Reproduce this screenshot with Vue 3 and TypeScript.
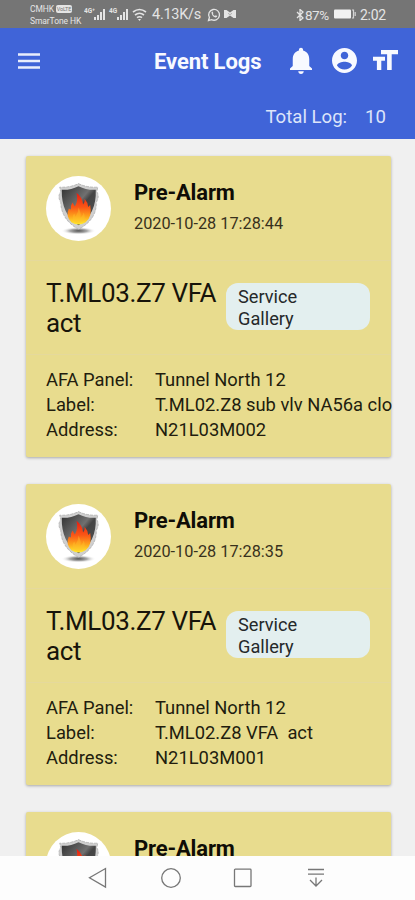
<script setup lang="ts">
interface LogEntry {
  id: number
  title: string
  time?: string
  message?: string
  location?: string
  panel?: string
  label?: string
  address?: string
}

const total = 10

const logs: LogEntry[] = [
  { id: 1, title: 'Pre-Alarm', time: '2020-10-28 17:28:44', message: 'T.ML03.Z7 VFA act', location: 'Service Gallery', panel: 'Tunnel North 12', label: 'T.ML02.Z8 sub vlv NA56a clo', address: 'N21L03M002' },
  { id: 2, title: 'Pre-Alarm', time: '2020-10-28 17:28:35', message: 'T.ML03.Z7 VFA act', location: 'Service Gallery', panel: 'Tunnel North 12', label: 'T.ML02.Z8 VFA  act', address: 'N21L03M001' },
  { id: 3, title: 'Pre-Alarm' },
]
</script>

<template>
  <div class="screen">
    <div class="status">
      <div class="carriers">
        <div class="carrier">CMHK <span class="volte">VoLTE</span></div>
        <div class="carrier">SmarTone HK</div>
      </div>
      <svg class="signals" viewBox="0 0 64 16" width="64" height="16">
        <g fill="#e4e4e4">
          <path d="M10 14v-3h2v3zM13 14V9h2v5zM16 14V6h2v8zM19 14V3h2v11zM33 14v-3h2v3zM36 14V9h2v5zM39 14V6h2v8zM42 14V3h2v11z" />
          <text x="0" y="7" font-size="6.500" font-weight="700">4G⁺</text>
          <text x="25" y="7" font-size="6.500" font-weight="700">4G</text>
        </g>
        <g fill="none" stroke="#e4e4e4" stroke-width="1.600">
          <path d="M49 6q6.500-5 13 0M51 9q4.500-3.500 9 0M53 11.700q2.500-2 5 0" />
        </g>
        <path d="M54 13h3l-1.500 2z" fill="#e4e4e4" />
      </svg>
      <span class="speed">4.13K/s</span>
      <svg class="chat" viewBox="0 0 14 14" width="14" height="14">
        <path d="M1.500 12.500l.9-3A5.400 5.400 0 1 1 4.600 11.600z" fill="none" stroke="#e4e4e4" stroke-width="1.300" />
        <path d="M4.500 4l1-.5.9 1.700-.6.7q.8 1.500 2.200 2l.7-.7 1.600.9q-.3 1.500-1.900 1.300Q4.600 8.500 4.500 4z" fill="#e4e4e4" />
      </svg>
      <svg class="mail" viewBox="0 0 12 10" width="12" height="10">
        <path d="M0 1h2.500L6 3.500l3.500-2.500H12v8H9.500L6 6.500 2.500 9H0z" fill="#e4e4e4" />
        <path d="M4 4.300L6 5.700l2-1.400" fill="none" stroke="#8a8a8a" stroke-width="0.600" />
      </svg>
      <svg class="bluetooth" viewBox="0 0 8 12" width="8" height="12">
        <path d="M1 3l6 6-3 2.500v-11L7 3 1 9" fill="none" stroke="#e4e4e4" stroke-width="1.300" />
      </svg>
      <span class="percent">87%</span>
      <svg class="battery" viewBox="0 0 22 10" width="22" height="10">
        <rect x="0" y="0.500" width="17" height="9" rx="1" fill="#f2f2f2" />
        <path d="M18 1h1.500v8H18M21.200 3v4" fill="none" stroke="#d4d4d4" stroke-width="1.200" />
      </svg>
      <span class="clock">2:02</span>
    </div>

    <header class="header">
      <div class="bar">
        <svg class="menu" viewBox="0 0 22 16" width="22" height="16">
          <path d="M0 1.500h22M0 8h22M0 14.500h22" stroke="#e9edfc" stroke-width="2.300" />
        </svg>
        <h1 class="heading">Event Logs</h1>
        <svg class="bell" viewBox="4 2 16 20" width="22" height="27" preserveAspectRatio="none">
          <path d="M12 22c1.100 0 2-.9 2-2h-4c0 1.100.9 2 2 2zm6-6v-5c0-3.070-1.630-5.640-4.500-6.320V4c0-.83-.67-1.500-1.500-1.500s-1.500.67-1.500 1.500v.68C7.640 5.360 6 7.920 6 11v5l-2 2v1h16v-1z" fill="#f8f9ff" />
        </svg>
        <svg class="account" viewBox="2 2 20 20" width="25" height="25">
          <path d="M12 2C6.480 2 2 6.480 2 12s4.480 10 10 10 10-4.480 10-10S17.520 2 12 2zm0 3c1.660 0 3 1.340 3 3s-1.340 3-3 3-3-1.340-3-3 1.340-3 3-3zm0 14.200c-2.500 0-4.710-1.280-6-3.220.03-1.990 4-3.080 6-3.080 1.990 0 5.970 1.090 6 3.080-1.290 1.940-3.500 3.220-6 3.220z" fill="#f8f9ff" />
        </svg>
        <svg class="textsize" viewBox="0 0 25 20" width="25" height="20">
          <path d="M8 0h17v4.200h-6.300V20h-4.600V4.200H8zM0 6.800h12v4H8.300V20H3.900v-9.200H0z" fill="#f8f9ff" />
        </svg>
      </div>
      <div class="total"><span>Total Log:</span><span>{{ total }}</span></div>
    </header>

    <main class="list">
      <article v-for="log in logs" :key="log.id" class="card">
        <section class="top">
          <div class="avatar">
            <svg viewBox="0 0 64 64" width="65" height="65">
              <defs>
                <linearGradient id="plate" x1="0" y1="0" x2="1" y2="1">
                  <stop offset="0" stop-color="#303030" />
                  <stop offset="0.450" stop-color="#707070" />
                  <stop offset="0.550" stop-color="#444" />
                  <stop offset="1" stop-color="#555" />
                </linearGradient>
                <linearGradient id="flame" x1="0" y1="0" x2="0" y2="1">
                  <stop offset="0" stop-color="#e51c12" />
                  <stop offset="0.450" stop-color="#fa5616" />
                  <stop offset="0.750" stop-color="#fda51c" />
                  <stop offset="1" stop-color="#ffed31" />
                </linearGradient>
                <radialGradient id="shade">
                  <stop offset="0" stop-color="#555" />
                  <stop offset="0.500" stop-color="#aaa" />
                  <stop offset="1" stop-color="#fff" stop-opacity="0" />
                </radialGradient>
              </defs>
              <ellipse cx="32" cy="54" rx="17" ry="3.800" fill="url(#shade)" />
              <path d="M32 7.500Q40 11.500 51 11L50 15.500Q53 20 49.500 26 50 43 32 52.500 15 43 14.500 26 11 20 14.500 15.500L13.500 11Q24 11.500 32 7.500z" fill="#cfcfcf" stroke="#aaa" stroke-width="0.700" stroke-dasharray="3 1" />
              <path d="M32 10Q40 14 49 13.500 50 38 32 48.500 15 38 15.500 13.500 24 14 32 10z" fill="url(#plate)" />
              <path d="M30 16.500Q36 21 36.500 28q2-2 1.500-5.500 3.500 4 3.500 8l2-2Q46 40 39 45.500q-7 4.500-14 0-6-6-2.500-13.500l2 1Q24 29 26 26l2.500 4Q32 24 30 16.500z" fill="url(#flame)" />
              <path d="M32 31q3 6 2 10 3-2 3-5 3 6-1 9-5 4-9-1-2-4 1-7l1 3q3-4 3-9z" fill="#ffc42a" opacity="0.400" />
            </svg>
          </div>
          <div class="titles">
            <h2 class="title">{{ log.title }}</h2>
            <div v-if="log.time" class="time">{{ log.time }}</div>
          </div>
        </section>
        <section v-if="log.message" class="middle">
          <div class="message">{{ log.message }}</div>
          <div class="chip">{{ log.location }}</div>
        </section>
        <dl v-if="log.panel" class="details">
          <dt>AFA Panel:</dt><dd>{{ log.panel }}</dd>
          <dt>Label:</dt><dd>{{ log.label }}</dd>
          <dt>Address:</dt><dd>{{ log.address }}</dd>
        </dl>
      </article>
    </main>

    <nav class="nav">
      <svg viewBox="0 0 20 22" width="20" height="22"><path d="M17.500 1.500v18.500L1.500 10.700z" /></svg>
      <svg viewBox="0 0 22 22" width="22" height="22"><circle cx="11" cy="11" r="9.300" /></svg>
      <svg viewBox="0 0 20 20" width="20" height="20"><rect x="1.500" y="1.200" width="16.500" height="17.300" rx="0.800" /></svg>
      <svg viewBox="0 0 18 20" width="18" height="20"><path d="M1 1.500h16M1 6.200h16M9 9.500v8.500M3 12l6 6 6-6" /></svg>
    </nav>
  </div>
</template>

<style>
body {
  margin: 0;
}
</style>

<style scoped>
.screen {
  width: 415px;
  height: 900px;
  overflow: hidden;
  display: flex;
  flex-direction: column;
  background: #f0f0f0;
  font-family: Roboto, "Liberation Sans", sans-serif;
  color: #221d0e;
}
.status {
  flex: none;
  height: 28px;
  box-sizing: border-box;
  padding-left: 30px;
  background: #757575;
  color: #e4e4e4;
  display: flex;
  align-items: center;
  white-space: nowrap;
  font-size: 14px;
}
.carriers {
  width: 54px;
  font-size: 8.500px;
  line-height: 12px;
  padding-top: 2px;
  letter-spacing: -0.100px;
}
.carrier {
  height: 12px;
}
.volte {
  display: inline-block;
  width: 16px;
  height: 8px;
  border-radius: 2px;
  background: #e4e4e4;
  color: #757575;
  font-size: 5.500px;
  line-height: 8px;
  text-align: center;
  vertical-align: 1px;
}
.signals {
  flex: none;
}
.speed {
  width: 49px;
  margin-left: 4px;
  padding-top: 1px;
  font-size: 14.500px;
  letter-spacing: -0.250px;
}
.chat {
  margin-left: 6px;
  margin-top: 1px;
}
.mail {
  margin-left: 3px;
}
.bluetooth {
  margin-left: 60px;
  margin-top: 1px;
}
.percent {
  width: 25px;
  margin-left: 1px;
  padding-top: 1px;
  font-size: 13.500px;
  letter-spacing: -0.500px;
}
.battery {
  margin-left: 4px;
}
.clock {
  margin-left: 4px;
  padding-top: 1px;
  letter-spacing: -0.300px;
}
.header {
  flex: none;
  height: 111px;
  background: #4064d8;
  color: #f8f9ff;
}
.bar {
  height: 67px;
  display: flex;
  align-items: center;
  padding-left: 18px;
}
.menu {
  margin-top: -2px;
}
.heading {
  margin: 0 0 0 114px;
  width: 108px;
  font-size: 22px;
  line-height: 26px;
  padding-top: 1px;
  font-weight: 700;
  letter-spacing: -0.100px;
  white-space: nowrap;
}
.bell {
  margin-left: 28px;
  margin-top: -2px;
}
.account {
  margin-left: 20px;
  margin-top: -2px;
}
.textsize {
  margin-left: 16px;
  margin-top: -3px;
}
.total {
  height: 44px;
  display: flex;
  justify-content: flex-end;
  gap: 18px;
  padding-right: 29px;
  font-size: 18.600px;
  line-height: 45px;
  color: #dde4fa;
}
.list {
  flex: 1;
  min-height: 0;
  overflow: hidden;
  display: flex;
  flex-direction: column;
  gap: 27px;
  padding: 17px 24.500px 0 25.500px;
}
.card {
  flex: none;
  height: 301px;
  background: #e8dc8e;
  border-radius: 2px;
  box-shadow: 0 1px 3px rgba(0, 0, 0, 0.300);
}
.top {
  height: 104px;
  border-bottom: 1px solid #e5d99c;
  display: flex;
  padding-left: 20.500px;
}
.avatar {
  width: 65px;
  height: 65px;
  margin-top: 20px;
  border-radius: 50%;
  background: #fff;
  overflow: hidden;
}
.titles {
  margin-left: 23px;
  padding-top: 23px;
}
.title {
  margin: 0;
  font-size: 22px;
  line-height: 28px;
  font-weight: 700;
  letter-spacing: -0.150px;
  color: #0f0d06;
}
.time {
  padding-top: 7px;
  font-size: 16.300px;
  line-height: 20px;
  color: #38311c;
}
.middle {
  height: 93px;
  border-bottom: 1px solid #e5d99c;
  display: flex;
  align-items: flex-start;
  padding-left: 20.500px;
}
.message {
  width: 180px;
  margin-top: 17px;
  font-size: 26px;
  line-height: 30px;
  letter-spacing: -0.350px;
  color: #17140a;
}
.chip {
  box-sizing: border-box;
  width: 144px;
  height: 47px;
  margin-top: 22px;
  padding: 3px 60px 0 12px;
  border-radius: 12px;
  background: #e3efef;
  font-size: 18.200px;
  line-height: 22px;
  color: #25292a;
}
.details {
  margin: 0;
  padding: 12px 0 0 20.500px;
  display: grid;
  grid-template-columns: 109px 1fr;
  font-size: 18.350px;
  line-height: 25px;
  white-space: pre;
}
.details dd {
  margin: 0;
}
.nav {
  flex: none;
  height: 44px;
  padding-right: 2px;
  background: #fdfdfd;
  display: grid;
  grid-template-columns: 73px 72px 73px 72px;
  justify-content: center;
  justify-items: center;
  align-items: center;
}
.nav svg {
  fill: none;
  stroke: #777;
  stroke-width: 1.300;
}
</style>
